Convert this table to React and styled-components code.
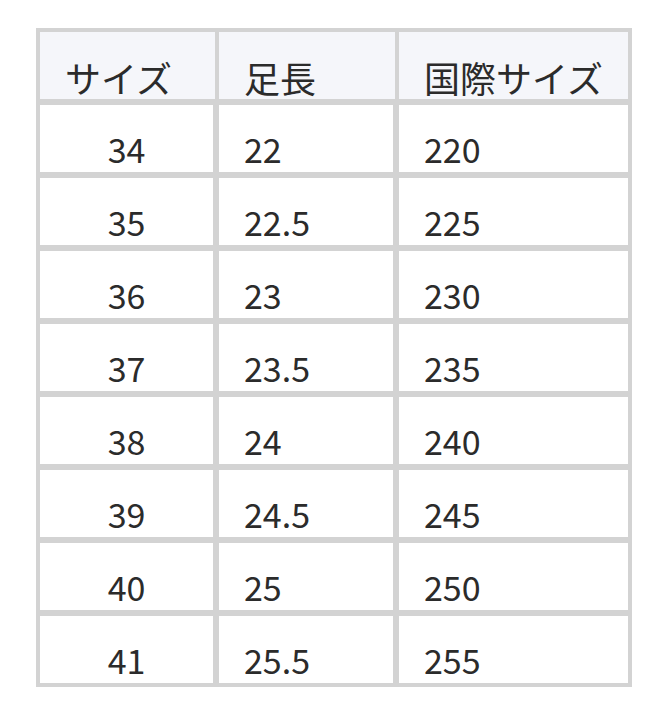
import styled, { createGlobalStyle } from "styled-components";

const GlobalStyle = createGlobalStyle`
  body {
    margin: 0;
    background: #ffffff;
    font-family: "Noto Sans CJK JP", "Noto Sans", sans-serif;
    color: #2b2b2b;
  }
`;

const Page = styled.div`
  padding: 28px 0 0 36px;
`;

const Frame = styled.div`
  width: 588px;
  padding: 4px;
  background: #d3d3d3;
  display: flex;
  flex-direction: column;
  gap: 6px;
`;

const Row = styled.div`
  display: grid;
  grid-template-columns: ${(props) =>
    props.$header ? "175px 176px 229px" : "173px 174px 229px"};
  column-gap: ${(props) => (props.$header ? "4px" : "6px")};
  height: 67px;
`;

const Cell = styled.div`
  display: flex;
  align-items: flex-end;
  justify-content: ${(props) => (props.$center ? "center" : "flex-start")};
  padding-bottom: ${(props) => (props.$header ? "4px" : "6px")};
  padding-left: ${(props) => (props.$center ? "0" : "25px")};
  background: ${(props) => (props.$header ? "#f5f6fa" : "#ffffff")};
  font-size: ${(props) => (props.$header ? "36px" : "34px")};
  line-height: ${(props) => (props.$header ? "36px" : "34px")};
  white-space: nowrap;
`;

const sizes = [
  ["34", "22", "220"],
  ["35", "22.5", "225"],
  ["36", "23", "230"],
  ["37", "23.5", "235"],
  ["38", "24", "240"],
  ["39", "24.5", "245"],
  ["40", "25", "250"],
  ["41", "25.5", "255"],
];

function App() {
  return (
    <Page>
      <GlobalStyle />
      <Frame>
        <Row $header>
          <Cell $header>サイズ</Cell>
          <Cell $header>足長</Cell>
          <Cell $header>国際サイズ</Cell>
        </Row>
        {sizes.map((row) => (
          <Row key={row[0]}>
            <Cell $center>{row[0]}</Cell>
            <Cell>{row[1]}</Cell>
            <Cell>{row[2]}</Cell>
          </Row>
        ))}
      </Frame>
    </Page>
  );
}

export default App;
